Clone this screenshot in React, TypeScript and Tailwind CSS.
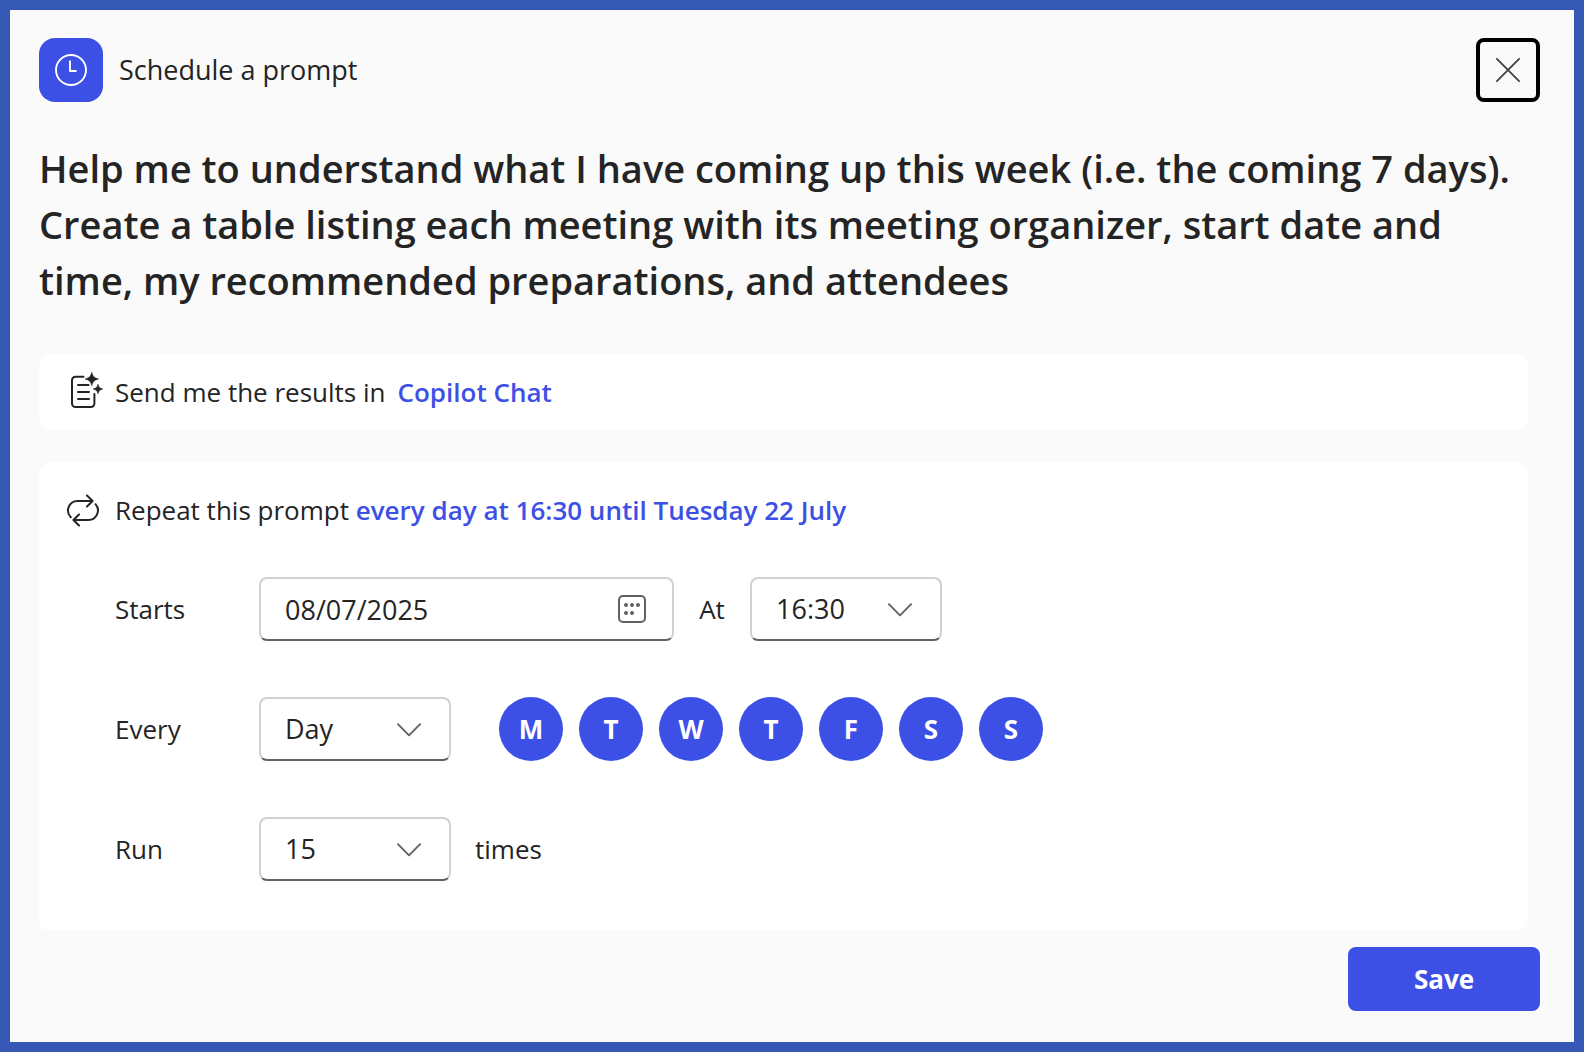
import { useState } from "react";
import type { ReactNode, SelectHTMLAttributes } from "react";

const days = [
  { name: "Monday", letter: "M" },
  { name: "Tuesday", letter: "T" },
  { name: "Wednesday", letter: "W" },
  { name: "Thursday", letter: "T" },
  { name: "Friday", letter: "F" },
  { name: "Saturday", letter: "S" },
  { name: "Sunday", letter: "S" },
];

function ClockIcon() {
  return (
    <svg viewBox="0 0 32 32" className="w-8 h-8" fill="none" stroke="currentColor" strokeWidth="1.9" aria-hidden="true">
      <circle cx="16" cy="16" r="15" />
      <path d="M15 6.500V17h6.500" strokeLinejoin="round" />
    </svg>
  );
}

function CloseIcon() {
  return (
    <svg viewBox="0 0 24 24" className="w-6 h-6" fill="none" stroke="currentColor" strokeWidth="1.8" strokeLinecap="round" aria-hidden="true">
      <path d="M.9.9l22.200 22.200M23.100.9L.9 23.100" />
    </svg>
  );
}

function DocumentSparkleIcon() {
  return (
    <svg viewBox="0 0 36 40" className="w-9 h-10 shrink-0" fill="none" aria-hidden="true">
      <path
        d="M14.500 4.700H6.500A3.500 3.500 0 0 0 3 8.200v23.300a3.500 3.500 0 0 0 3.500 3.500h15.400a3.500 3.500 0 0 0 3.500-3.500V22"
        stroke="currentColor"
        strokeWidth="2"
        strokeLinecap="round"
      />
      <path d="M9 13h10.500M9 20h11M9 27h11" stroke="currentColor" strokeWidth="2" strokeLinecap="round" />
      <path
        d="M22.800.3c1.100 4.200 2.400 5.500 6.700 6.700-4.300 1.200-5.600 2.500-6.700 6.700-1.100-4.200-2.400-5.500-6.700-6.700 4.300-1.200 5.600-2.500 6.700-6.700zM29 12.300c.8 3 1.800 4 4.700 4.700-2.900.8-3.900 1.800-4.700 4.700-.8-2.900-1.800-3.900-4.700-4.700 2.900-.7 3.900-1.700 4.700-4.700z"
        fill="currentColor"
        stroke="currentColor"
        strokeWidth=".6"
        strokeLinejoin="round"
      />
    </svg>
  );
}

function RepeatIcon() {
  return (
    <svg viewBox="0 0 36 36" className="w-9 h-9 shrink-0" fill="none" stroke="currentColor" strokeWidth="2" strokeLinecap="round" strokeLinejoin="round" aria-hidden="true">
      <path d="M22 3.500L27.600 9 22 14.500M27 9H12.500A9.500 9.500 0 0 0 5.800 25.200" />
      <path d="M14 22.500L8.400 28l5.600 5.500M9 28h14.500a9.500 9.500 0 0 0 7-15.800" />
    </svg>
  );
}

function CalendarIcon() {
  return (
    <svg viewBox="0 0 28 28" className="w-7 h-7" fill="none" aria-hidden="true">
      <rect x="1" y="1" width="26" height="26" rx="4" stroke="currentColor" strokeWidth="2" />
      <g fill="currentColor">
        <circle cx="8" cy="10" r="2" />
        <circle cx="14" cy="10" r="2" />
        <circle cx="20" cy="10" r="2" />
        <circle cx="8" cy="18" r="2" />
        <circle cx="14" cy="18" r="2" />
      </g>
    </svg>
  );
}

function ChevronIcon() {
  return (
    <svg viewBox="0 0 24 16" className="absolute right-[30px] top-1/2 -translate-y-1/2 w-6 h-4 text-[#616161] pointer-events-none" fill="none" stroke="currentColor" strokeWidth="1.9" strokeLinecap="round" strokeLinejoin="round" aria-hidden="true">
      <path d="M.9 3.200L12 14.300 23.100 3.200" />
    </svg>
  );
}

function Dropdown(props: SelectHTMLAttributes<HTMLSelectElement>) {
  return (
    <div className="relative w-48">
      <select
        {...props}
        className="appearance-none w-full h-16 pl-6 pr-16 bg-white rounded-lg border-2 border-[#d1d1d1] border-b-[#616161] text-[27px] outline-none"
      />
      <ChevronIcon />
    </div>
  );
}

function Row({ label, htmlFor, children }: { label: string; htmlFor: string; children: ReactNode }) {
  return (
    <div className="flex items-center">
      <label htmlFor={htmlFor} className="w-36 shrink-0">
        {label}
      </label>
      {children}
    </div>
  );
}

export default function App() {
  const [date, setDate] = useState("08/07/2025");
  const [time, setTime] = useState("16:30");
  const [unit, setUnit] = useState("Day");
  const [runs, setRuns] = useState("15");

  return (
    <div className="min-h-screen flex bg-[#3558b4] p-2.5 font-['Open_Sans','Noto_Sans',sans-serif] text-[26px] leading-10 text-[#242424]">
      <main className="flex-1 flex flex-col bg-[#fafafa] pl-[29px] pr-[34px] pt-7 pb-[31px]">
        {/* Header */}
        <header className="flex items-center gap-4">
          <div className="w-16 h-16 flex items-center justify-center rounded-2xl bg-[#3d50e6] text-white">
            <ClockIcon />
          </div>
          <span className="flex-1 text-[27px]">Schedule a prompt</span>
          <button
            type="button"
            aria-label="Close"
            className="w-16 h-16 flex items-center justify-center rounded-lg border-4 border-black text-[#424242]"
          >
            <CloseIcon />
          </button>
        </header>

        <h1 className="mt-[38px] text-[38px] leading-14 font-semibold">
          Help me to understand what I have coming up this week (i.e. the coming 7 days). Create a table listing each
          meeting with its meeting organizer, start date and time, my recommended preparations, and attendees
        </h1>

        {/* Destination */}
        <section className="mt-[46px] mr-3 h-[76px] pl-[30px] flex items-center gap-2.5 rounded-xl bg-white">
          <DocumentSparkleIcon />
          <p className="flex gap-3">
            Send me the results in
            <a href="#chat" className="font-semibold text-[#3d50e6]">
              Copilot Chat
            </a>
          </p>
        </section>

        {/* Schedule */}
        <section className="mt-8 mr-3 pt-7 pb-[50px] rounded-xl bg-white">
          <div className="pl-[26px] flex items-center gap-3.5">
            <RepeatIcon />
            <p>
              Repeat this prompt{" "}
              <a href="#schedule" className="font-semibold text-[#3d50e6]">
                every day at 16:30 until Tuesday 22 July
              </a>
            </p>
          </div>

          <div className="mt-[47px] pl-[76px] flex flex-col gap-14">
            <Row label="Starts" htmlFor="starts">
              <div className="relative w-[415px]">
                <input
                  id="starts"
                  type="text"
                  value={date}
                  onChange={(e) => setDate(e.target.value)}
                  className="w-full h-16 pl-6 pr-16 bg-white rounded-lg border-2 border-[#d1d1d1] border-b-[#616161] text-[27px] outline-none"
                />
                <button type="button" aria-label="Pick a date" className="absolute right-7 top-1/2 -translate-y-1/2 text-[#616161]">
                  <CalendarIcon />
                </button>
              </div>
              <label htmlFor="time" className="w-[76px] text-center">
                At
              </label>
              <Dropdown id="time" value={time} onChange={(e) => setTime(e.target.value)}>
                <option>16:00</option>
                <option>16:30</option>
                <option>17:00</option>
              </Dropdown>
            </Row>

            <Row label="Every" htmlFor="unit">
              <Dropdown id="unit" value={unit} onChange={(e) => setUnit(e.target.value)}>
                <option>Day</option>
                <option>Week</option>
              </Dropdown>
              <div className="ml-12 flex gap-4">
                {days.map((day) => (
                  <button
                    key={day.name}
                    type="button"
                    aria-label={day.name}
                    aria-pressed="true"
                    className="w-16 h-16 rounded-full bg-[#3d50e6] font-bold text-white"
                  >
                    {day.letter}
                  </button>
                ))}
              </div>
            </Row>

            <Row label="Run" htmlFor="runs">
              <Dropdown id="runs" value={runs} onChange={(e) => setRuns(e.target.value)}>
                <option>5</option>
                <option>10</option>
                <option>15</option>
              </Dropdown>
              <span className="ml-6">times</span>
            </Row>
          </div>
        </section>

        <button type="button" className="mt-4 self-end w-48 h-16 rounded-lg bg-[#3d50e6] font-bold text-white">
          Save
        </button>
      </main>
    </div>
  );
}
